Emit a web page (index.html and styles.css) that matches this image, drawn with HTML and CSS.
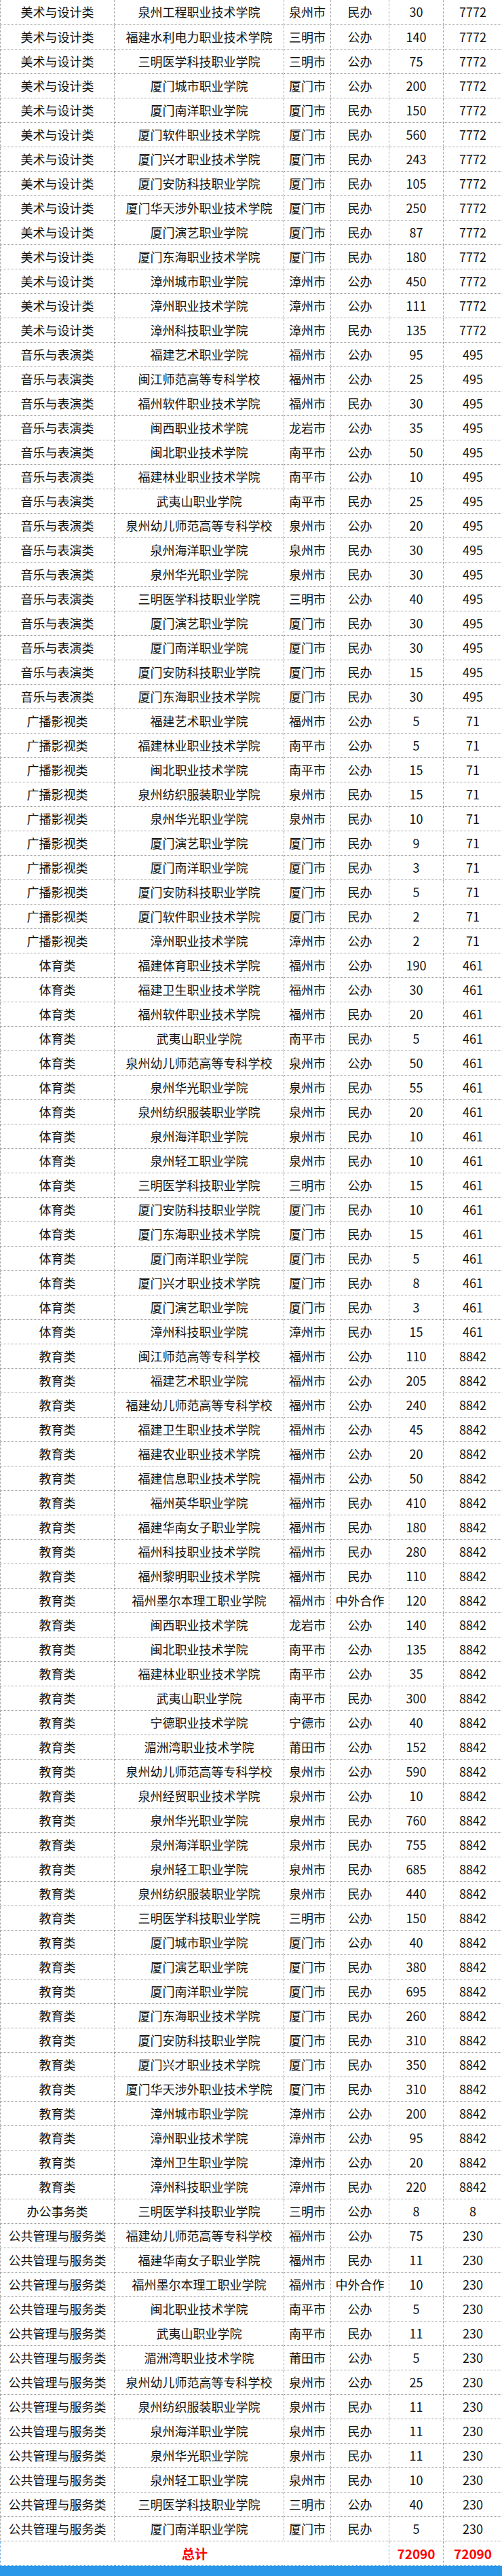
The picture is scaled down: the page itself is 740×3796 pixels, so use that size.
FILE: index.html
```html
<!DOCTYPE html>
<html lang="zh-CN">
<head>
<meta charset="utf-8">
<title>招生计划</title>
<link rel="stylesheet" href="styles.css">
</head>
<body>
<table class="plan">
<colgroup><col class="c-cat"><col class="c-school"><col class="c-city"><col class="c-type"><col class="c-num"><col class="c-total"></colgroup>
<tbody>
<tr><td>美术与设计类</td><td>泉州工程职业技术学院</td><td>泉州市</td><td>民办</td><td>30</td><td>7772</td></tr>
<tr><td>美术与设计类</td><td>福建水利电力职业技术学院</td><td>三明市</td><td>公办</td><td>140</td><td>7772</td></tr>
<tr><td>美术与设计类</td><td>三明医学科技职业学院</td><td>三明市</td><td>公办</td><td>75</td><td>7772</td></tr>
<tr><td>美术与设计类</td><td>厦门城市职业学院</td><td>厦门市</td><td>公办</td><td>200</td><td>7772</td></tr>
<tr><td>美术与设计类</td><td>厦门南洋职业学院</td><td>厦门市</td><td>民办</td><td>150</td><td>7772</td></tr>
<tr><td>美术与设计类</td><td>厦门软件职业技术学院</td><td>厦门市</td><td>民办</td><td>560</td><td>7772</td></tr>
<tr><td>美术与设计类</td><td>厦门兴才职业技术学院</td><td>厦门市</td><td>民办</td><td>243</td><td>7772</td></tr>
<tr><td>美术与设计类</td><td>厦门安防科技职业学院</td><td>厦门市</td><td>民办</td><td>105</td><td>7772</td></tr>
<tr><td>美术与设计类</td><td>厦门华天涉外职业技术学院</td><td>厦门市</td><td>民办</td><td>250</td><td>7772</td></tr>
<tr><td>美术与设计类</td><td>厦门演艺职业学院</td><td>厦门市</td><td>民办</td><td>87</td><td>7772</td></tr>
<tr><td>美术与设计类</td><td>厦门东海职业技术学院</td><td>厦门市</td><td>民办</td><td>180</td><td>7772</td></tr>
<tr><td>美术与设计类</td><td>漳州城市职业学院</td><td>漳州市</td><td>公办</td><td>450</td><td>7772</td></tr>
<tr><td>美术与设计类</td><td>漳州职业技术学院</td><td>漳州市</td><td>公办</td><td>111</td><td>7772</td></tr>
<tr><td>美术与设计类</td><td>漳州科技职业学院</td><td>漳州市</td><td>民办</td><td>135</td><td>7772</td></tr>
<tr><td>音乐与表演类</td><td>福建艺术职业学院</td><td>福州市</td><td>公办</td><td>95</td><td>495</td></tr>
<tr><td>音乐与表演类</td><td>闽江师范高等专科学校</td><td>福州市</td><td>公办</td><td>25</td><td>495</td></tr>
<tr><td>音乐与表演类</td><td>福州软件职业技术学院</td><td>福州市</td><td>民办</td><td>30</td><td>495</td></tr>
<tr><td>音乐与表演类</td><td>闽西职业技术学院</td><td>龙岩市</td><td>公办</td><td>35</td><td>495</td></tr>
<tr><td>音乐与表演类</td><td>闽北职业技术学院</td><td>南平市</td><td>公办</td><td>50</td><td>495</td></tr>
<tr><td>音乐与表演类</td><td>福建林业职业技术学院</td><td>南平市</td><td>公办</td><td>10</td><td>495</td></tr>
<tr><td>音乐与表演类</td><td>武夷山职业学院</td><td>南平市</td><td>民办</td><td>25</td><td>495</td></tr>
<tr><td>音乐与表演类</td><td>泉州幼儿师范高等专科学校</td><td>泉州市</td><td>公办</td><td>20</td><td>495</td></tr>
<tr><td>音乐与表演类</td><td>泉州海洋职业学院</td><td>泉州市</td><td>民办</td><td>30</td><td>495</td></tr>
<tr><td>音乐与表演类</td><td>泉州华光职业学院</td><td>泉州市</td><td>民办</td><td>30</td><td>495</td></tr>
<tr><td>音乐与表演类</td><td>三明医学科技职业学院</td><td>三明市</td><td>公办</td><td>40</td><td>495</td></tr>
<tr><td>音乐与表演类</td><td>厦门演艺职业学院</td><td>厦门市</td><td>民办</td><td>30</td><td>495</td></tr>
<tr><td>音乐与表演类</td><td>厦门南洋职业学院</td><td>厦门市</td><td>民办</td><td>30</td><td>495</td></tr>
<tr><td>音乐与表演类</td><td>厦门安防科技职业学院</td><td>厦门市</td><td>民办</td><td>15</td><td>495</td></tr>
<tr><td>音乐与表演类</td><td>厦门东海职业技术学院</td><td>厦门市</td><td>民办</td><td>30</td><td>495</td></tr>
<tr><td>广播影视类</td><td>福建艺术职业学院</td><td>福州市</td><td>公办</td><td>5</td><td>71</td></tr>
<tr><td>广播影视类</td><td>福建林业职业技术学院</td><td>南平市</td><td>公办</td><td>5</td><td>71</td></tr>
<tr><td>广播影视类</td><td>闽北职业技术学院</td><td>南平市</td><td>公办</td><td>15</td><td>71</td></tr>
<tr><td>广播影视类</td><td>泉州纺织服装职业学院</td><td>泉州市</td><td>民办</td><td>15</td><td>71</td></tr>
<tr><td>广播影视类</td><td>泉州华光职业学院</td><td>泉州市</td><td>民办</td><td>10</td><td>71</td></tr>
<tr><td>广播影视类</td><td>厦门演艺职业学院</td><td>厦门市</td><td>民办</td><td>9</td><td>71</td></tr>
<tr><td>广播影视类</td><td>厦门南洋职业学院</td><td>厦门市</td><td>民办</td><td>3</td><td>71</td></tr>
<tr><td>广播影视类</td><td>厦门安防科技职业学院</td><td>厦门市</td><td>民办</td><td>5</td><td>71</td></tr>
<tr><td>广播影视类</td><td>厦门软件职业技术学院</td><td>厦门市</td><td>民办</td><td>2</td><td>71</td></tr>
<tr><td>广播影视类</td><td>漳州职业技术学院</td><td>漳州市</td><td>公办</td><td>2</td><td>71</td></tr>
<tr><td>体育类</td><td>福建体育职业技术学院</td><td>福州市</td><td>公办</td><td>190</td><td>461</td></tr>
<tr><td>体育类</td><td>福建卫生职业技术学院</td><td>福州市</td><td>公办</td><td>30</td><td>461</td></tr>
<tr><td>体育类</td><td>福州软件职业技术学院</td><td>福州市</td><td>民办</td><td>20</td><td>461</td></tr>
<tr><td>体育类</td><td>武夷山职业学院</td><td>南平市</td><td>民办</td><td>5</td><td>461</td></tr>
<tr><td>体育类</td><td>泉州幼儿师范高等专科学校</td><td>泉州市</td><td>公办</td><td>50</td><td>461</td></tr>
<tr><td>体育类</td><td>泉州华光职业学院</td><td>泉州市</td><td>民办</td><td>55</td><td>461</td></tr>
<tr><td>体育类</td><td>泉州纺织服装职业学院</td><td>泉州市</td><td>民办</td><td>20</td><td>461</td></tr>
<tr><td>体育类</td><td>泉州海洋职业学院</td><td>泉州市</td><td>民办</td><td>10</td><td>461</td></tr>
<tr><td>体育类</td><td>泉州轻工职业学院</td><td>泉州市</td><td>民办</td><td>10</td><td>461</td></tr>
<tr><td>体育类</td><td>三明医学科技职业学院</td><td>三明市</td><td>公办</td><td>15</td><td>461</td></tr>
<tr><td>体育类</td><td>厦门安防科技职业学院</td><td>厦门市</td><td>民办</td><td>10</td><td>461</td></tr>
<tr><td>体育类</td><td>厦门东海职业技术学院</td><td>厦门市</td><td>民办</td><td>15</td><td>461</td></tr>
<tr><td>体育类</td><td>厦门南洋职业学院</td><td>厦门市</td><td>民办</td><td>5</td><td>461</td></tr>
<tr><td>体育类</td><td>厦门兴才职业技术学院</td><td>厦门市</td><td>民办</td><td>8</td><td>461</td></tr>
<tr><td>体育类</td><td>厦门演艺职业学院</td><td>厦门市</td><td>民办</td><td>3</td><td>461</td></tr>
<tr><td>体育类</td><td>漳州科技职业学院</td><td>漳州市</td><td>民办</td><td>15</td><td>461</td></tr>
<tr><td>教育类</td><td>闽江师范高等专科学校</td><td>福州市</td><td>公办</td><td>110</td><td>8842</td></tr>
<tr><td>教育类</td><td>福建艺术职业学院</td><td>福州市</td><td>公办</td><td>205</td><td>8842</td></tr>
<tr><td>教育类</td><td>福建幼儿师范高等专科学校</td><td>福州市</td><td>公办</td><td>240</td><td>8842</td></tr>
<tr><td>教育类</td><td>福建卫生职业技术学院</td><td>福州市</td><td>公办</td><td>45</td><td>8842</td></tr>
<tr><td>教育类</td><td>福建农业职业技术学院</td><td>福州市</td><td>公办</td><td>20</td><td>8842</td></tr>
<tr><td>教育类</td><td>福建信息职业技术学院</td><td>福州市</td><td>公办</td><td>50</td><td>8842</td></tr>
<tr><td>教育类</td><td>福州英华职业学院</td><td>福州市</td><td>民办</td><td>410</td><td>8842</td></tr>
<tr><td>教育类</td><td>福建华南女子职业学院</td><td>福州市</td><td>民办</td><td>180</td><td>8842</td></tr>
<tr><td>教育类</td><td>福州科技职业技术学院</td><td>福州市</td><td>民办</td><td>280</td><td>8842</td></tr>
<tr><td>教育类</td><td>福州黎明职业技术学院</td><td>福州市</td><td>民办</td><td>110</td><td>8842</td></tr>
<tr><td>教育类</td><td>福州墨尔本理工职业学院</td><td>福州市</td><td>中外合作</td><td>120</td><td>8842</td></tr>
<tr><td>教育类</td><td>闽西职业技术学院</td><td>龙岩市</td><td>公办</td><td>140</td><td>8842</td></tr>
<tr><td>教育类</td><td>闽北职业技术学院</td><td>南平市</td><td>公办</td><td>135</td><td>8842</td></tr>
<tr><td>教育类</td><td>福建林业职业技术学院</td><td>南平市</td><td>公办</td><td>35</td><td>8842</td></tr>
<tr><td>教育类</td><td>武夷山职业学院</td><td>南平市</td><td>民办</td><td>300</td><td>8842</td></tr>
<tr><td>教育类</td><td>宁德职业技术学院</td><td>宁德市</td><td>公办</td><td>40</td><td>8842</td></tr>
<tr><td>教育类</td><td>湄洲湾职业技术学院</td><td>莆田市</td><td>公办</td><td>152</td><td>8842</td></tr>
<tr><td>教育类</td><td>泉州幼儿师范高等专科学校</td><td>泉州市</td><td>公办</td><td>590</td><td>8842</td></tr>
<tr><td>教育类</td><td>泉州经贸职业技术学院</td><td>泉州市</td><td>公办</td><td>10</td><td>8842</td></tr>
<tr><td>教育类</td><td>泉州华光职业学院</td><td>泉州市</td><td>民办</td><td>760</td><td>8842</td></tr>
<tr><td>教育类</td><td>泉州海洋职业学院</td><td>泉州市</td><td>民办</td><td>755</td><td>8842</td></tr>
<tr><td>教育类</td><td>泉州轻工职业学院</td><td>泉州市</td><td>民办</td><td>685</td><td>8842</td></tr>
<tr><td>教育类</td><td>泉州纺织服装职业学院</td><td>泉州市</td><td>民办</td><td>440</td><td>8842</td></tr>
<tr><td>教育类</td><td>三明医学科技职业学院</td><td>三明市</td><td>公办</td><td>150</td><td>8842</td></tr>
<tr><td>教育类</td><td>厦门城市职业学院</td><td>厦门市</td><td>公办</td><td>40</td><td>8842</td></tr>
<tr><td>教育类</td><td>厦门演艺职业学院</td><td>厦门市</td><td>民办</td><td>380</td><td>8842</td></tr>
<tr><td>教育类</td><td>厦门南洋职业学院</td><td>厦门市</td><td>民办</td><td>695</td><td>8842</td></tr>
<tr><td>教育类</td><td>厦门东海职业技术学院</td><td>厦门市</td><td>民办</td><td>260</td><td>8842</td></tr>
<tr><td>教育类</td><td>厦门安防科技职业学院</td><td>厦门市</td><td>民办</td><td>310</td><td>8842</td></tr>
<tr><td>教育类</td><td>厦门兴才职业技术学院</td><td>厦门市</td><td>民办</td><td>350</td><td>8842</td></tr>
<tr><td>教育类</td><td>厦门华天涉外职业技术学院</td><td>厦门市</td><td>民办</td><td>310</td><td>8842</td></tr>
<tr><td>教育类</td><td>漳州城市职业学院</td><td>漳州市</td><td>公办</td><td>200</td><td>8842</td></tr>
<tr><td>教育类</td><td>漳州职业技术学院</td><td>漳州市</td><td>公办</td><td>95</td><td>8842</td></tr>
<tr><td>教育类</td><td>漳州卫生职业学院</td><td>漳州市</td><td>公办</td><td>20</td><td>8842</td></tr>
<tr><td>教育类</td><td>漳州科技职业学院</td><td>漳州市</td><td>民办</td><td>220</td><td>8842</td></tr>
<tr><td>办公事务类</td><td>三明医学科技职业学院</td><td>三明市</td><td>公办</td><td>8</td><td>8</td></tr>
<tr><td>公共管理与服务类</td><td>福建幼儿师范高等专科学校</td><td>福州市</td><td>公办</td><td>75</td><td>230</td></tr>
<tr><td>公共管理与服务类</td><td>福建华南女子职业学院</td><td>福州市</td><td>民办</td><td>11</td><td>230</td></tr>
<tr><td>公共管理与服务类</td><td>福州墨尔本理工职业学院</td><td>福州市</td><td>中外合作</td><td>10</td><td>230</td></tr>
<tr><td>公共管理与服务类</td><td>闽北职业技术学院</td><td>南平市</td><td>公办</td><td>5</td><td>230</td></tr>
<tr><td>公共管理与服务类</td><td>武夷山职业学院</td><td>南平市</td><td>民办</td><td>11</td><td>230</td></tr>
<tr><td>公共管理与服务类</td><td>湄洲湾职业技术学院</td><td>莆田市</td><td>公办</td><td>5</td><td>230</td></tr>
<tr><td>公共管理与服务类</td><td>泉州幼儿师范高等专科学校</td><td>泉州市</td><td>公办</td><td>25</td><td>230</td></tr>
<tr><td>公共管理与服务类</td><td>泉州纺织服装职业学院</td><td>泉州市</td><td>民办</td><td>11</td><td>230</td></tr>
<tr><td>公共管理与服务类</td><td>泉州海洋职业学院</td><td>泉州市</td><td>民办</td><td>11</td><td>230</td></tr>
<tr><td>公共管理与服务类</td><td>泉州华光职业学院</td><td>泉州市</td><td>民办</td><td>11</td><td>230</td></tr>
<tr><td>公共管理与服务类</td><td>泉州轻工职业学院</td><td>泉州市</td><td>民办</td><td>10</td><td>230</td></tr>
<tr><td>公共管理与服务类</td><td>三明医学科技职业学院</td><td>三明市</td><td>公办</td><td>40</td><td>230</td></tr>
<tr><td>公共管理与服务类</td><td>厦门南洋职业学院</td><td>厦门市</td><td>民办</td><td>5</td><td>230</td></tr>
<tr class="sum"><td colspan="4">总计</td><td>72090</td><td>72090</td></tr>
</tbody>
</table>
<div class="bar"></div>
</body>
</html>
```

FILE: styles.css
```css
html, body {
  margin: 0;
  padding: 0;
  background: #ffffff;
}

body {
  font-family: "Noto Sans CJK SC", "Noto Sans", sans-serif;
  color: #111111;
}

.plan {
  width: 740px;
  border-collapse: collapse;
  table-layout: fixed;
}

.c-cat { width: 168px; }
.c-school { width: 250px; }
.c-city { width: 69px; }
.c-type { width: 86px; }
.c-num { width: 80px; }
.c-total { width: 87px; }

.plan tr {
  height: 36px;
}

.plan td {
  padding: 0;
  border: 1px dotted #9a9a9a;
  border-top: none;
  text-align: center;
  vertical-align: middle;
  font-size: 18px;
  line-height: 35px;
  white-space: nowrap;
  overflow: hidden;
}

.plan .sum td {
  border-color: #9a9a9a #5aa8e8 #5aa8e8 #5aa8e8;
  border-top: 1px dotted #9a9a9a;
  color: #ff0000;
  font-weight: bold;
  font-size: 19px;
}

.bar {
  height: 16px;
  background: #2a97e8;
}
```
